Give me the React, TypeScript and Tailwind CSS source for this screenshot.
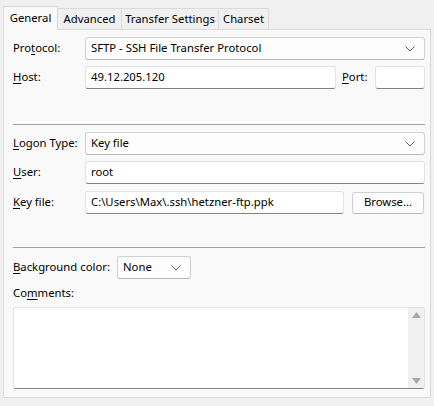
import React from 'react'

const font = { fontFamily: '"Segoe UI", "Noto Sans", sans-serif' }

function Chevron() {
  return (
    <svg width="10" height="6" viewBox="0 0 10 6" className="text-[#606060]">
      <path d="M0.5 0.5 L5 5 L9.5 0.5" fill="none" stroke="currentColor" strokeWidth="1" />
    </svg>
  )
}

function Select({ value, className }: { value: string; className: string }) {
  return (
    <div
      className={`shrink-0 flex items-center justify-between pl-[5px] pr-[9px] h-[23px] bg-[#fdfdfd] border border-[#d0d0d0] border-b-[#b8b8b8] rounded-[3px] text-[11.3px] text-black ${className}`}
    >
      <span>{value}</span>
      <Chevron />
    </div>
  )
}

function Input({ value, className }: { value?: string; className: string }) {
  return (
    <div
      className={`shrink-0 flex items-center pl-[5px] h-[23px] bg-white border border-[#e3e3e3] border-b-[#858585] rounded-[3px] text-[11.3px] text-black ${className}`}
    >
      {value}
    </div>
  )
}

function Label({ pre, key_, post, className = '' }: { pre: string; key_: string; post: string; className?: string }) {
  return (
    <span className={`shrink-0 text-[11.3px] text-black ${className}`}>
      {pre}
      <span className="underline underline-offset-2">{key_}</span>
      {post}
    </span>
  )
}

export default function App() {
  return (
    <div className="w-[434px] h-[406px] bg-[#f0f0f0] pt-[5px] px-[3px]" style={font}>
      {/* tabs */}
      <div className="flex items-end h-[24px] text-[11.3px] text-black">
        <div className="h-[24px] w-[55px] bg-[#f9f9f9] border border-b-0 border-[#dadada] flex items-center justify-center relative z-10 -mb-px pb-[1px]">
          General
        </div>
        <div className="h-[21px] w-[64px] bg-[#f0f0f0] border border-l-0 border-b-0 border-[#dadada] flex items-center justify-center">
          Advanced
        </div>
        <div className="h-[21px] w-[97px] bg-[#f0f0f0] border border-l-0 border-b-0 border-[#dadada] flex items-center justify-center">
          Transfer Settings
        </div>
        <div className="h-[21px] w-[50px] bg-[#f0f0f0] border border-l-0 border-b-0 border-[#dadada] flex items-center justify-center">
          Charset
        </div>
      </div>

      {/* panel */}
      <div className="w-[428px] h-[369px] bg-[#f9f9f9] border border-[#dadada] pl-[9px] pr-[5px] pt-[7px]">
        <div className="flex items-center h-[23px]">
          <Label pre="Pro" key_="t" post="ocol:" className="w-[72px]" />
          <Select value="SFTP - SSH File Transfer Protocol" className="w-[340px]" />
        </div>
        <div className="flex items-center h-[23px] mt-[6px]">
          <Label pre="" key_="H" post="ost:" className="w-[72px]" />
          <Input value="49.12.205.120" className="w-[251px]" />
          <Label pre="" key_="P" post="ort:" className="ml-[6px] w-[33px]" />
          <Input className="w-[50px]" />
        </div>

        <div className="h-px bg-[#a0a0a0] mt-[35px] w-[412px]" />

        <div className="flex items-center h-[23px] mt-[7px]">
          <Label pre="" key_="L" post="ogon Type:" className="w-[72px]" />
          <Select value="Key file" className="w-[340px]" />
        </div>
        <div className="flex items-center h-[23px] mt-[6px]">
          <Label pre="" key_="U" post="ser:" className="w-[72px]" />
          <Input value="root" className="w-[340px]" />
        </div>
        <div className="flex items-center h-[23px] mt-[7px]">
          <Label pre="" key_="K" post="ey file:" className="w-[72px]" />
          <Input value="C:\Users\Max\.ssh\hetzner-ftp.ppk" className="w-[259px]" />
          <button className="shrink-0 ml-[8px] w-[72px] h-[22px] bg-[#fdfdfd] border border-[#d0d0d0] border-b-[#b8b8b8] rounded-[3px] text-[11.3px] text-black">
            Browse...
          </button>
        </div>

        <div className="h-px bg-[#a0a0a0] mt-[33px] w-[412px]" />

        <div className="flex items-center h-[23px] mt-[8px]">
          <Label pre="" key_="B" post="ackground color:" className="w-[104px]" />
          <Select value="None" className="w-[74px]" />
        </div>
        <div className="mt-[5px] h-[18px] flex items-center">
          <Label pre="Co" key_="m" post="ments:" />
        </div>
        <div className="mt-[5px] w-[412px] h-[82px] bg-white border border-[#e3e3e3] border-b-[#858585] rounded-[3px] flex justify-end">
          <div className="w-[16px] h-full bg-[#f0f0f0] flex flex-col items-center justify-between py-[4px]">
            <svg width="9" height="6" viewBox="0 0 9 6">
              <path d="M4.5 0 L9 6 L0 6 Z" fill="#a8a8a8" />
            </svg>
            <svg width="9" height="6" viewBox="0 0 9 6">
              <path d="M0 0 L9 0 L4.5 6 Z" fill="#a8a8a8" />
            </svg>
          </div>
        </div>
      </div>
    </div>
  )
}
